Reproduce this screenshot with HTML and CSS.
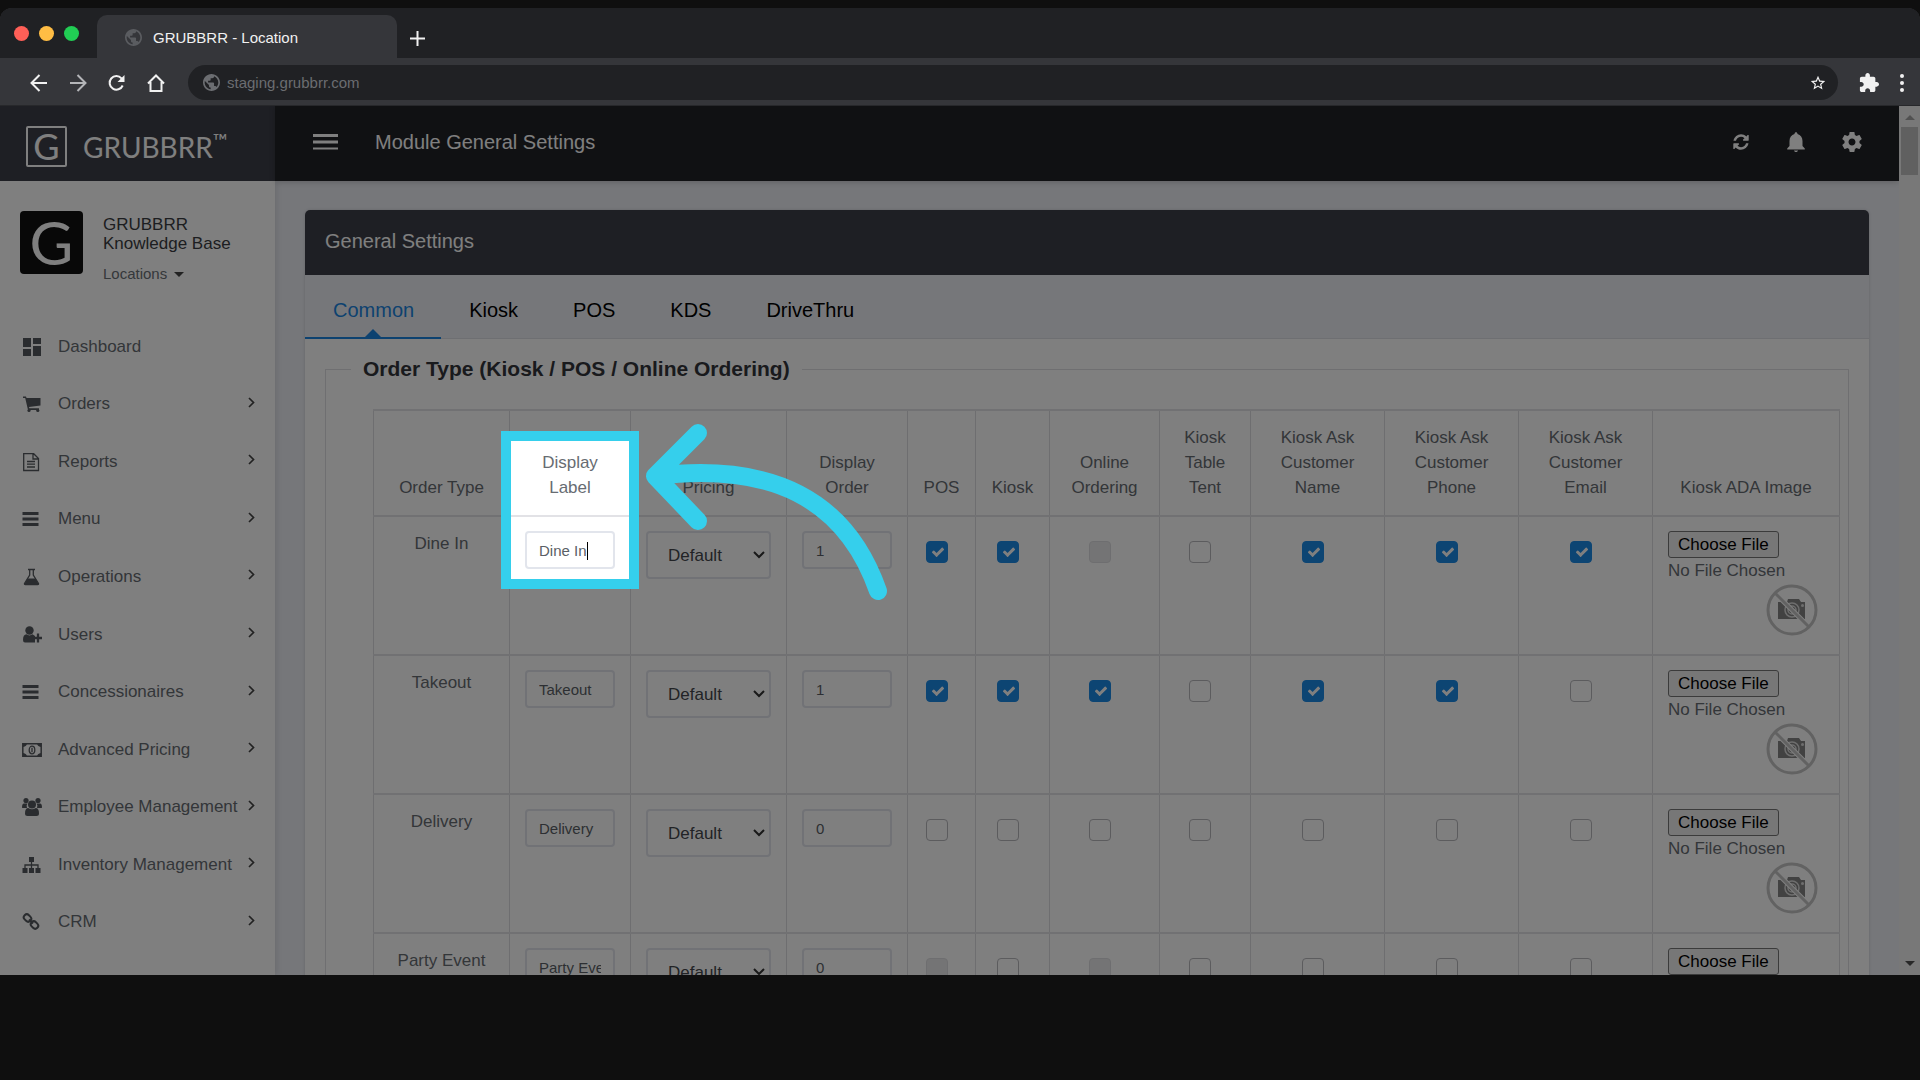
FILE: index.html
```
<!DOCTYPE html>
<html lang="en">
<head>
<meta charset="UTF-8" />
<meta name="viewport" content="width=device-width, initial-scale=1" />
<title>GRUBBRR - Location</title>
<link rel="stylesheet" href="styles.css">
</head>
<body>
  <!-- Shared icons -->
  <svg class="sprite" aria-hidden="true">
    <symbol id="globe" viewBox="2 2 20 20"><path d="M12 2C6.48 2 2 6.48 2 12s4.48 10 10 10 10-4.48 10-10S17.52 2 12 2zm-1 17.93c-3.95-.49-7-3.85-7-7.93 0-.62.08-1.21.21-1.79L9 15v1c0 1.1.9 2 2 2v1.93zm6.9-2.54c-.26-.81-1-1.39-1.9-1.39h-1v-3c0-.55-.45-1-1-1H8v-2h2c.55 0 1-.45 1-1V7h2c1.1 0 2-.9 2-2v-.41c2.93 1.19 5 4.06 5 7.41 0 2.08-.8 3.97-2.1 5.39z"/></symbol>
    <symbol id="chevron" viewBox="0 0 7 11"><path d="M1 1l4.5 4.5L1 10" fill="none" stroke="currentColor" stroke-width="1.7"/></symbol>
    <symbol id="bars" viewBox="0 0 16 14"><path d="M0 0h16v3H0zM0 5.5h16v3H0zM0 11h16v3H0z"/></symbol>
    <symbol id="no-image" viewBox="0 0 52 52">
      <path d="M12 18h9l1-3h11l2 3h4v17H12z" fill="#858585"/>
      <circle cx="26" cy="26" r="7" fill="none" stroke="#ddd" stroke-width="1.5"/>
      <circle cx="26" cy="26" r="4" fill="none" stroke="#ddd" stroke-width="1.5"/>
      <circle cx="36.5" cy="21.5" r="1.5" fill="#ddd"/>
      <path d="M10 10l32 32" stroke="#fff" stroke-width="5"/>
      <circle cx="26" cy="26" r="24" fill="none" stroke="#c4c4c4" stroke-width="3"/>
      <path d="M9 9l34 34" stroke="#c4c4c4" stroke-width="3"/>
    </symbol>
  </svg>

  <div class="browser">
    <div class="tab-strip">
      <div class="lights"><span class="red"></span><span class="yellow"></span><span class="green"></span></div>
      <div class="browser-tab"><svg class="globe"><use href="#globe"/></svg>GRUBBRR - Location</div>
      <button class="new-tab" aria-label="New tab"><svg width="15" height="15" viewBox="0 0 15 15"><path d="M7.5 0v15M0 7.5h15" stroke="currentColor" stroke-width="2"/></svg></button>
    </div>
    <div class="toolbar">
      <button aria-label="Back"><svg width="18" height="18" viewBox="0 0 18 18"><path d="M17 9H2M9.5 1L1.5 9l8 8" fill="none" stroke="currentColor" stroke-width="2"/></svg></button>
      <button class="muted" aria-label="Forward"><svg width="18" height="18" viewBox="0 0 18 18"><path d="M1 9h15M8.5 1l8 8-8 8" fill="none" stroke="currentColor" stroke-width="2"/></svg></button>
      <button aria-label="Reload"><svg width="18" height="18" viewBox="0 0 18 18"><path d="M14.7 11.5A6.8 6.800 0 1 1 13.5 4.300L15 6" fill="none" stroke="currentColor" stroke-width="2"/><path d="M16.500 1v7h-7z"/></svg></button>
      <button aria-label="Home"><svg width="18" height="18" viewBox="0 0 18 18"><path d="M1 9.5L9 1.5l8 8M3.5 8v9h11V8" fill="none" stroke="currentColor" stroke-width="2"/></svg></button>
      <div class="address">
        <svg class="globe"><use href="#globe"/></svg>
        <input type="text" value="staging.grubbrr.com" aria-label="Address" />
        <svg class="star" width="16" height="16" viewBox="1 1 22 22"><path d="M22 9.24l-7.19-.62L12 2 9.19 8.63 2 9.24l5.46 4.73L5.82 21 12 17.27 18.18 21l-1.63-7.03L22 9.24zM12 15.4l-3.76 2.27 1-4.28-3.32-2.88 4.38-.38L12 6.1l1.71 4.04 4.38.38-3.32 2.88 1 4.28L12 15.4z"/></svg>
      </div>
      <button aria-label="Extensions"><svg width="20" height="20" viewBox="1 1 22 22"><path d="M20.5 11H19V7c0-1.1-.9-2-2-2h-4V3.5C13 2.12 11.88 1 10.5 1S8 2.12 8 3.5V5H4c-1.1 0-1.99.9-1.99 2v3.8H3.5c1.49 0 2.7 1.21 2.7 2.7s-1.21 2.7-2.7 2.7H2V20c0 1.1.9 2 2 2h3.8v-1.5c0-1.49 1.21-2.7 2.7-2.7 1.49 0 2.7 1.21 2.7 2.7V22H17c1.1 0 2-.9 2-2v-4h1.5c1.38 0 2.5-1.12 2.5-2.5S21.88 11 20.5 11z"/></svg></button>
      <button aria-label="More"><svg width="4" height="18" viewBox="0 0 4 18"><circle cx="2" cy="2" r="2"/><circle cx="2" cy="9" r="2"/><circle cx="2" cy="16" r="2"/></svg></button>
    </div>

    <div class="app">
      <aside class="sidebar">
        <div class="brand"><span class="brand-mark">G</span><span class="brand-name">GRUBBRR<sup>™</sup></span></div>
        <div class="profile">
          <div class="avatar">G</div>
          <div>
            <div class="profile-name">GRUBBRR<br>Knowledge Base</div>
            <a class="locations" href="#">Locations <span class="caret"></span></a>
          </div>
        </div>
        <nav class="menu">
          <a href="#"><svg class="icon" viewBox="0 0 20 20"><path d="M1 1h8v9H1zM11 1h8v6h-8zM1 12h8v7H1zM11 9h8v10h-8z"/></svg>Dashboard</a>
          <a href="#"><svg class="icon" viewBox="0 0 20 20"><path d="M1 2.5h3l.5 1.500H18.500v7.500L7 13l.3 1.200H17V16H6L3.200 4H1z"/><circle cx="7" cy="16.500" r="1.600"/><circle cx="15.800" cy="16.500" r="1.600"/></svg>Orders<svg class="arrow-r"><use href="#chevron"/></svg></a>
          <a href="#"><svg class="icon" viewBox="0 0 20 20"><path d="M1.7 1.7h10l4.800 4.800v12H1.700zM11 1.700V7h5.500M5 9.500h8M5 12.200h8M5 15h8" fill="none" stroke="currentColor" stroke-width="1.3"/></svg>Reports<svg class="arrow-r"><use href="#chevron"/></svg></a>
          <a href="#"><svg class="icon bars"><use href="#bars"/></svg>Menu<svg class="arrow-r"><use href="#chevron"/></svg></a>
          <a href="#"><svg class="icon" viewBox="0 0 20 20"><path d="M6 2.5h7M7.700 2.500v5.500L2.500 16.500q-.3 1 .8 1h12.400q1.100 0 .8-1L11.300 8V2.500" fill="none" stroke="currentColor" stroke-width="1.3"/><path d="M5.500 11.500h8l3 5.500h-14z"/></svg>Operations<svg class="arrow-r"><use href="#chevron"/></svg></a>
          <a href="#"><svg class="icon" viewBox="0 0 20 20"><circle cx="7.500" cy="5.500" r="4.200"/><path d="M1 15q0-5.500 3.500-5.700 3 2.200 6 0L13 11v6.500H3q-2 0-2-2.500z"/><path d="M16 8.500v9M11.500 13h9" stroke="currentColor" stroke-width="2.3"/></svg>Users<svg class="arrow-r"><use href="#chevron"/></svg></a>
          <a href="#"><svg class="icon bars"><use href="#bars"/></svg>Concessionaires<svg class="arrow-r"><use href="#chevron"/></svg></a>
          <a href="#"><svg class="icon" viewBox="0 0 20 20"><path d="M.8 3.800h18.400v12.400H.8z" fill="none" stroke="currentColor" stroke-width="1.5"/><path d="M1 3h4q0 3.500-4 4zM19 3h-4q0 3.500 4 4zM1 17h4q0-3.500-4-4zM19 17h-4q0-3.500 4-4z"/><ellipse cx="10" cy="10" rx="2.800" ry="3.800" fill="none" stroke="currentColor" stroke-width="1.3"/><path d="M10 7.800v4.500" stroke="currentColor" stroke-width="1.3"/></svg>Advanced Pricing<svg class="arrow-r"><use href="#chevron"/></svg></a>
          <a href="#"><svg class="icon" viewBox="0 0 20 20"><circle cx="4" cy="3.500" r="2.600"/><circle cx="16" cy="3.500" r="2.600"/><path d="M0 10.500Q0 6.500 2 6.500h3.500Q4 8 5 11H1.500Q0 11 0 10.500zM20 10.500q0-4-2-4h-3.500Q16 8 15 11h3.500q1.500 0 1.500-.5z"/><circle cx="10" cy="7.500" r="4"/><path d="M3 16.500Q3 11 6.300 11q3.700 2.500 7.400 0 3.300 0 3.300 5.500 0 2.500-2.500 2.500h-9Q3 19 3 16.500z"/></svg>Employee Management<svg class="arrow-r"><use href="#chevron"/></svg></a>
          <a href="#"><svg class="icon" viewBox="0 0 20 20"><path d="M7 2h5v5H7zM.5 13h5v5h-5zM7 13h5v5H7zM13.500 13h5v5h-5z"/><path d="M9.500 6v8M3 14v-4h13v4" fill="none" stroke="currentColor" stroke-width="1.3"/></svg>Inventory Management<svg class="arrow-r"><use href="#chevron"/></svg></a>
          <a href="#"><svg class="icon" viewBox="0 0 20 20"><g fill="none" stroke="currentColor" stroke-width="2"><rect x="1.500" y="3" width="8" height="6" rx="3" transform="rotate(45 5.500 6)"/><rect x="8.500" y="10" width="8" height="6" rx="3" transform="rotate(45 12.500 13)"/><path d="M7 7.500l4 4"/></g></svg>CRM<svg class="arrow-r"><use href="#chevron"/></svg></a>
        </nav>
      </aside>

      <main class="main">
        <header class="topbar">
          <button aria-label="Toggle menu"><svg width="25" height="16" viewBox="0 0 25 16"><path d="M0 0h25v3H0zM0 6.500h25v3H0zM0 13.500h25v2H0z"/></svg></button>
          <span class="page-title">Module General Settings</span>
          <button aria-label="Refresh"><svg width="18" height="18" viewBox="0 0 1792 1792"><path d="M1639 1056q0 5-1 7-64 268-268 434.500t-478 166.500q-146 0-282.500-55t-243.500-157l-129 129q-19 19-45 19t-45-19-19-45v-448q0-26 19-45t45-19h448q26 0 45 19t19 45-19 45l-137 137q71 66 161 102t187 36q134 0 250-65t186-179q11-17 53-117 8-23 30-23h192q13 0 22.500 9.500t9.500 22.500zm25-800v448q0 26-19 45t-45 19h-448q-26 0-45-19t-19-45 19-45l138-138q-148-137-349-137-134 0-250 65t-186 179q-11 17-53 117-8 23-30 23h-199q-13 0-22.500-9.500t-9.500-22.500v-7q65-268 270-434.500t480-166.500q146 0 284 55.500t245 156.500l130-129q19-19 45-19t45 19 19 45z"/></svg></button>
          <button aria-label="Notifications"><svg width="18" height="20" viewBox="3 2 18 20"><path d="M12 22c1.100 0 2-.6 2-1.500h-4c0 .9.9 1.500 2 1.500zM18.500 16v-5c0-3.600-1.900-6.300-5-7.100C13.500 2.800 12.800 2.200 12 2.200s-1.500.6-1.500 1.700c-3.100.8-5 3.500-5 7.100v5l-2.300 2.500v1h17.600v-1z"/></svg></button>
          <button aria-label="Settings"><svg width="20" height="20" viewBox="2 2 20 20"><path d="M19.43 12.98c.04-.32.07-.64.07-.98s-.03-.66-.07-.98l2.11-1.65c.19-.15.24-.42.12-.64l-2-3.46c-.12-.22-.39-.3-.61-.22l-2.49 1c-.52-.4-1.08-.73-1.69-.98l-.38-2.65C14.46 2.18 14.25 2 14 2h-4c-.25 0-.46.18-.49.42l-.38 2.65c-.61.25-1.17.59-1.69.98l-2.49-1c-.23-.09-.49 0-.61.22l-2 3.46c-.13.22-.07.49.12.64l2.11 1.65c-.04.32-.07.65-.07.98s.03.66.07.98l-2.11 1.65c-.19.15-.24.42-.12.64l2 3.46c.12.22.39.3.61.22l2.49-1c.52.4 1.08.73 1.69.98l.38 2.65c.03.24.24.42.49.42h4c.25 0 .46-.18.49-.42l.38-2.65c.61-.25 1.17-.59 1.69-.98l2.49 1c.23.09.49 0 .61-.22l2-3.46c.12-.22.07-.49-.12-.64l-2.11-1.65zM12 15.5c-1.93 0-3.5-1.57-3.5-3.5s1.57-3.5 3.5-3.5 3.5 1.57 3.5 3.5-1.57 3.5-3.5 3.5z"/></svg></button>
        </header>

        <section class="card">
          <h1 class="card-header">General Settings</h1>
          <div class="tabs">
            <a class="active" href="#">Common</a>
            <a href="#">Kiosk</a>
            <a href="#">POS</a>
            <a href="#">KDS</a>
            <a href="#">DriveThru</a>
          </div>
          <div class="card-body">
            <fieldset>
              <legend>Order Type (Kiosk / POS / Online Ordering)</legend>
              <table>
                <colgroup>
                  <col class="c-type"><col class="c-field"><col class="c-pricing"><col class="c-field"><col class="c-pos"><col class="c-kiosk"><col class="c-online"><col class="c-tent"><col class="c-ask"><col class="c-ask"><col class="c-ask"><col class="c-image">
                </colgroup>
                <thead>
                  <tr>
                    <th>Order Type</th>
                    <th class="spotlit">Display Label
                      <!-- tutorial highlight and pointer -->
                      <span class="spotlight"></span>
                      <svg class="pointer" width="250" height="190" viewBox="640 415 250 190"><path d="M698 433l-43 43 43 45M655 476C770 462 845 497 878 591" fill="none" stroke="#35cfec" stroke-width="18" stroke-linecap="round" stroke-linejoin="round"/></svg>
                    </th>
                    <th>Pricing</th>
                    <th>Display Order</th>
                    <th>POS</th>
                    <th>Kiosk</th>
                    <th>Online Ordering</th>
                    <th>Kiosk Table Tent</th>
                    <th>Kiosk Ask Customer Name</th>
                    <th>Kiosk Ask Customer Phone</th>
                    <th>Kiosk Ask Customer Email</th>
                    <th>Kiosk ADA Image</th>
                  </tr>
                </thead>
                <tbody>
                  <tr>
                    <td>Dine In</td>
                    <td class="editing"><input type="text" value="Dine In" aria-label="Display label" /></td>
                    <td><select aria-label="Pricing"><option>Default</option></select></td>
                    <td><input type="text" value="1" aria-label="Display order" /></td>
                    <td><input type="checkbox" aria-label="POS" checked /></td>
                    <td><input type="checkbox" aria-label="Kiosk" checked /></td>
                    <td><input type="checkbox" aria-label="Online ordering" disabled /></td>
                    <td><input type="checkbox" aria-label="Table tent" /></td>
                    <td><input type="checkbox" aria-label="Ask name" checked /></td>
                    <td><input type="checkbox" aria-label="Ask phone" checked /></td>
                    <td><input type="checkbox" aria-label="Ask email" checked /></td>
                    <td class="upload"><button>Choose File</button><span>No File Chosen</span><svg><use href="#no-image"/></svg></td>
                  </tr>
                  <tr>
                    <td>Takeout</td>
                    <td><input type="text" value="Takeout" aria-label="Display label" /></td>
                    <td><select aria-label="Pricing"><option>Default</option></select></td>
                    <td><input type="text" value="1" aria-label="Display order" /></td>
                    <td><input type="checkbox" aria-label="POS" checked /></td>
                    <td><input type="checkbox" aria-label="Kiosk" checked /></td>
                    <td><input type="checkbox" aria-label="Online ordering" checked /></td>
                    <td><input type="checkbox" aria-label="Table tent" /></td>
                    <td><input type="checkbox" aria-label="Ask name" checked /></td>
                    <td><input type="checkbox" aria-label="Ask phone" checked /></td>
                    <td><input type="checkbox" aria-label="Ask email" /></td>
                    <td class="upload"><button>Choose File</button><span>No File Chosen</span><svg><use href="#no-image"/></svg></td>
                  </tr>
                  <tr>
                    <td>Delivery</td>
                    <td><input type="text" value="Delivery" aria-label="Display label" /></td>
                    <td><select aria-label="Pricing"><option>Default</option></select></td>
                    <td><input type="text" value="0" aria-label="Display order" /></td>
                    <td><input type="checkbox" aria-label="POS" /></td>
                    <td><input type="checkbox" aria-label="Kiosk" /></td>
                    <td><input type="checkbox" aria-label="Online ordering" /></td>
                    <td><input type="checkbox" aria-label="Table tent" /></td>
                    <td><input type="checkbox" aria-label="Ask name" /></td>
                    <td><input type="checkbox" aria-label="Ask phone" /></td>
                    <td><input type="checkbox" aria-label="Ask email" /></td>
                    <td class="upload"><button>Choose File</button><span>No File Chosen</span><svg><use href="#no-image"/></svg></td>
                  </tr>
                  <tr>
                    <td>Party Event</td>
                    <td><input type="text" value="Party Event" aria-label="Display label" /></td>
                    <td><select aria-label="Pricing"><option>Default</option></select></td>
                    <td><input type="text" value="0" aria-label="Display order" /></td>
                    <td><input type="checkbox" aria-label="POS" disabled /></td>
                    <td><input type="checkbox" aria-label="Kiosk" /></td>
                    <td><input type="checkbox" aria-label="Online ordering" disabled /></td>
                    <td><input type="checkbox" aria-label="Table tent" /></td>
                    <td><input type="checkbox" aria-label="Ask name" /></td>
                    <td><input type="checkbox" aria-label="Ask phone" /></td>
                    <td><input type="checkbox" aria-label="Ask email" /></td>
                    <td class="upload"><button>Choose File</button></td>
                  </tr>
                </tbody>
              </table>
            </fieldset>
          </div>
        </section>
      </main>

      <div class="scrollbar">
        <span class="up"></span>
        <span class="thumb"></span>
        <span class="down"></span>
      </div>
    </div>
  </div>
</body>
</html>
```
FILE: styles.css
```
* {
  box-sizing: border-box;
}
body {
  margin: 0;
  height: 100vh;
  padding: 8px 0 105px;
  background: #0f0f0f;
  font-family: "Liberation Sans", Arial, sans-serif;
  font-size: 17px;
  color: #676c72;
  overflow: hidden;
}
a {
  color: inherit;
  text-decoration: none;
}
button {
  display: flex;
  padding: 0;
  border: none;
  background: none;
  color: inherit;
  font: inherit;
  cursor: pointer;
}
svg {
  fill: currentColor;
  flex: none;
}
.sprite {
  display: none;
}

/* Browser frame */
.browser {
  display: flex;
  flex-direction: column;
  height: 100%;
  border-radius: 12px 12px 0 0;
  background: #35363a;
  overflow: hidden;
}
.tab-strip {
  display: flex;
  align-items: flex-end;
  height: 50px;
  background: #202124;
  color: #f1f1f1;
}
.lights {
  display: flex;
  align-self: center;
  gap: 10px;
  width: 97px;
  padding-left: 14px;
}
.lights span {
  width: 15px;
  height: 15px;
  border-radius: 50%;
}
.red { background: #ff5f57; }
.yellow { background: #ffbd44; }
.green { background: #21cd54; }
.browser-tab {
  display: flex;
  align-items: center;
  gap: 11px;
  width: 300px;
  height: 43px;
  padding: 1px 0 0 28px;
  border-radius: 10px 10px 0 0;
  background: #35363a;
  font-size: 15px;
}
.globe {
  width: 17px;
  height: 17px;
  color: #6b6d71;
}
.browser-tab .globe {
  color: #5a5c60;
}
.new-tab {
  align-self: center;
  margin: 10px 0 0 13px;
}
.toolbar {
  display: flex;
  align-items: center;
  gap: 21px;
  height: 48px;
  padding: 2px 16px 0 30px;
  border-bottom: 1px solid #27282b;
  color: #f1f1f1;
}
.toolbar .muted {
  color: #b4b5b8;
}
.address {
  display: flex;
  align-items: center;
  flex: 1;
  gap: 7px;
  height: 35px;
  margin-left: 2px;
  padding: 0 12px 0 15px;
  border-radius: 18px;
  background: #202124;
}
.address input {
  flex: 1;
  padding: 0;
  border: none;
  outline: none;
  background: none;
  color: #6b6d71;
  font: 15px "Liberation Sans", Arial, sans-serif;
}

/* App */
.app {
  display: flex;
  flex: 1;
  min-height: 0;
  background: #eceef4;
  overflow: hidden;
}
.sidebar {
  display: flex;
  flex-direction: column;
  width: 275px;
  background: #fff;
  box-shadow: 1px 0 6px rgba(60, 60, 80, 0.15);
}
.brand {
  display: flex;
  align-items: center;
  gap: 16px;
  height: 75px;
  padding: 6px 0 0 26px;
  background: #3c3e48;
  color: #fff;
  font-family: Lato, sans-serif;
}
.brand-mark {
  width: 41px;
  height: 41px;
  border: 2px solid #fff;
  border-radius: 2px;
  font-size: 36px;
  line-height: 36px;
  text-align: center;
}
.brand-name {
  font-size: 28px;
}
.brand-name sup {
  font-size: 20px;
  line-height: 0;
}
.profile {
  display: flex;
  gap: 20px;
  padding: 30px 20px 0;
  color: #3a3c42;
}
.avatar {
  width: 63px;
  height: 63px;
  border-radius: 4px;
  background: #111;
  color: #fff;
  font: 60px/62px Lato, sans-serif;
  text-align: center;
}
.profile-name {
  margin-top: 4px;
  line-height: 19px;
}
.locations {
  display: flex;
  align-items: center;
  gap: 7px;
  margin-top: 11px;
  color: #6b7076;
  font-size: 15px;
  line-height: 20px;
}
.caret {
  border: 5px solid transparent;
  border-top-color: #444;
  border-bottom: none;
}
.menu {
  display: flex;
  flex-direction: column;
  flex: 1;
  padding: 34px 20px 24px 22px;
}
.menu a {
  display: flex;
  align-items: center;
  flex: 1;
  white-space: nowrap;
}
.icon {
  width: 20px;
  height: 20px;
  margin-right: 16px;
  color: #55595e;
}
.icon.bars {
  width: 17px;
  height: 14px;
  margin-right: 19px;
}
.arrow-r {
  width: 7px;
  height: 11px;
  margin: 0 0 4px auto;
  color: #444;
}

.main {
  flex: 1;
  min-width: 0;
}
.topbar {
  display: flex;
  align-items: center;
  gap: 37px;
  height: 75px;
  padding: 0 37px 4px 38px;
  background: #202226;
  box-shadow: 0 1px 6px rgba(0, 0, 0, 0.2);
  color: #fff;
}
.page-title {
  flex: 1;
  padding-top: 2px;
  font-size: 20px;
}
.card {
  margin: 29px 30px 0;
  border-radius: 5px 5px 0 0;
  background: #fff;
  box-shadow: 0 0 3px rgba(60, 60, 80, 0.2);
}
.card-header {
  margin: 0;
  padding: 1px 20px 3px;
  border-radius: 5px 5px 0 0;
  background: #3c3e48;
  color: #fff;
  font-size: 20px;
  font-weight: normal;
  line-height: 61px;
}
.tabs {
  display: flex;
  height: 64px;
  border-bottom: 1px solid #dcdee4;
  background: #edeff4;
  color: #000;
  font-size: 20px;
}
.tabs a {
  position: relative;
  height: 64px;
  padding: 0 27px 0 28px;
  line-height: 70px;
}
.tabs .active {
  border-bottom: 2px solid #1b84e0;
  color: #1b84e0;
}
.tabs .active::after {
  content: "";
  position: absolute;
  bottom: 0;
  left: 50%;
  margin-left: -8px;
  border: 8px solid transparent;
  border-bottom-color: #1b84e0;
  border-top: none;
}
.card-body {
  padding: 18px 20px;
}
fieldset {
  min-width: 0;
  margin: 0;
  padding: 0 10px 20px 25px;
  border: 1px solid #dfdfe3;
}
legend {
  padding: 0 12px;
  color: #33353a;
  font-size: 21px;
  font-weight: bold;
  line-height: 24px;
}

/* Order type table */
table {
  width: calc(100% - 22px);
  margin: 28px 0 0 22px;
  border-collapse: collapse;
  table-layout: fixed;
}
.c-type { width: 136px; }
.c-field { width: 121px; }
.c-pricing { width: 156px; }
.c-pos { width: 68px; }
.c-kiosk { width: 74px; }
.c-online { width: 110px; }
.c-tent { width: 91px; }
.c-ask { width: 134px; }
.c-image { width: 187px; }
th, td {
  border: 1px solid #dcdce0;
  border-width: 2px 1px;
  border-top-color: #e2e2e6;
  border-bottom-color: #e2e2e6;
  font-weight: normal;
  line-height: 25px;
  text-align: center;
}
th {
  padding: 14px 15px 15px;
  vertical-align: bottom;
}
td {
  height: 139px;
  padding: 14px 15px;
  vertical-align: top;
}
td input[type=text], select {
  display: block;
  width: 100%;
  height: 38px;
  padding: 0 12px;
  border: 2px solid #e2e5ec;
  border-radius: 4px;
  outline: none;
  background: #fff;
  color: #5a5f66;
  font: 15px "Liberation Sans", Arial, sans-serif;
}
td select {
  height: 48px;
  padding: 0 20px;
  appearance: none;
  background: #fff url("data:image/svg+xml,%3Csvg xmlns='http://www.w3.org/2000/svg' width='12' height='8'%3E%3Cpath d='M1 1l5 5 5-5' fill='none' stroke='%23333' stroke-width='2'/%3E%3C/svg%3E") no-repeat right 4px center;
  color: #44474c;
  font-size: 17px;
}
input[type=checkbox] {
  display: block;
  width: 22px;
  height: 22px;
  margin: 10px auto 0;
  border: 1px solid #b8b8bc;
  border-radius: 4px;
  appearance: none;
  background: #fff;
}
td:has(input[type=checkbox]) {
  padding-right: 25px;
}
input[type=checkbox]:checked {
  border-color: #1b8ae6;
  background: #1b8ae6 url("data:image/svg+xml,%3Csvg xmlns='http://www.w3.org/2000/svg' width='14' height='14' viewBox='0 0 1792 1792'%3E%3Cpath fill='%23fff' d='M1671 566q0 40-28 68l-724 724-136 136q-28 28-68 28t-68-28l-136-136-362-362q-28-28-28-68t28-68l136-136q28-28 68-28t68 28l294 295 656-657q28-28 68-28t68 28l136 136q28 28 28 68z'/%3E%3C/svg%3E") no-repeat right 2px center;
}
input[type=checkbox]:disabled {
  border-color: #dcdce0;
  background: #e9e9ea;
}
.upload {
  text-align: left;
}
.upload button {
  padding: 0 9px;
  border: 1px solid #767676;
  border-radius: 3px;
  background: #efefef;
  color: #000;
}
.upload span {
  display: block;
}
.upload svg {
  display: block;
  width: 52px;
  height: 52px;
  margin: 1px 6px 0 auto;
}

/* Text cursor in the field being edited */
.editing {
  position: relative;
}
.editing::after {
  content: "";
  position: absolute;
  top: 25px;
  left: 77px;
  width: 1px;
  height: 18px;
  background: #000;
}

/* Highlight: the wide shadow dims the rest of the app */
.spotlit {
  position: relative;
}
.spotlight {
  position: absolute;
  z-index: 10;
  top: 20px;
  left: -9px;
  right: -9px;
  height: 158px;
  border: 10px solid #35cfec;
  box-shadow: 0 0 0 4000px rgba(0, 0, 0, 0.5);
  pointer-events: none;
}
.pointer {
  position: absolute;
  z-index: 11;
  top: 4px;
  left: 130px;
  pointer-events: none;
}

.scrollbar {
  display: flex;
  flex-direction: column;
  align-items: center;
  width: 21px;
  padding: 9px 0;
  background: #f1f1f1;
}
.scrollbar .up {
  border: 5px solid transparent;
  border-bottom-color: #a3a3a3;
  border-top: none;
}
.scrollbar .thumb {
  width: 17px;
  height: 48px;
  margin-top: 7px;
  background: #c1c1c1;
}
.scrollbar .down {
  margin-top: auto;
  border: 5px solid transparent;
  border-top-color: #505050;
  border-bottom: none;
}
```
